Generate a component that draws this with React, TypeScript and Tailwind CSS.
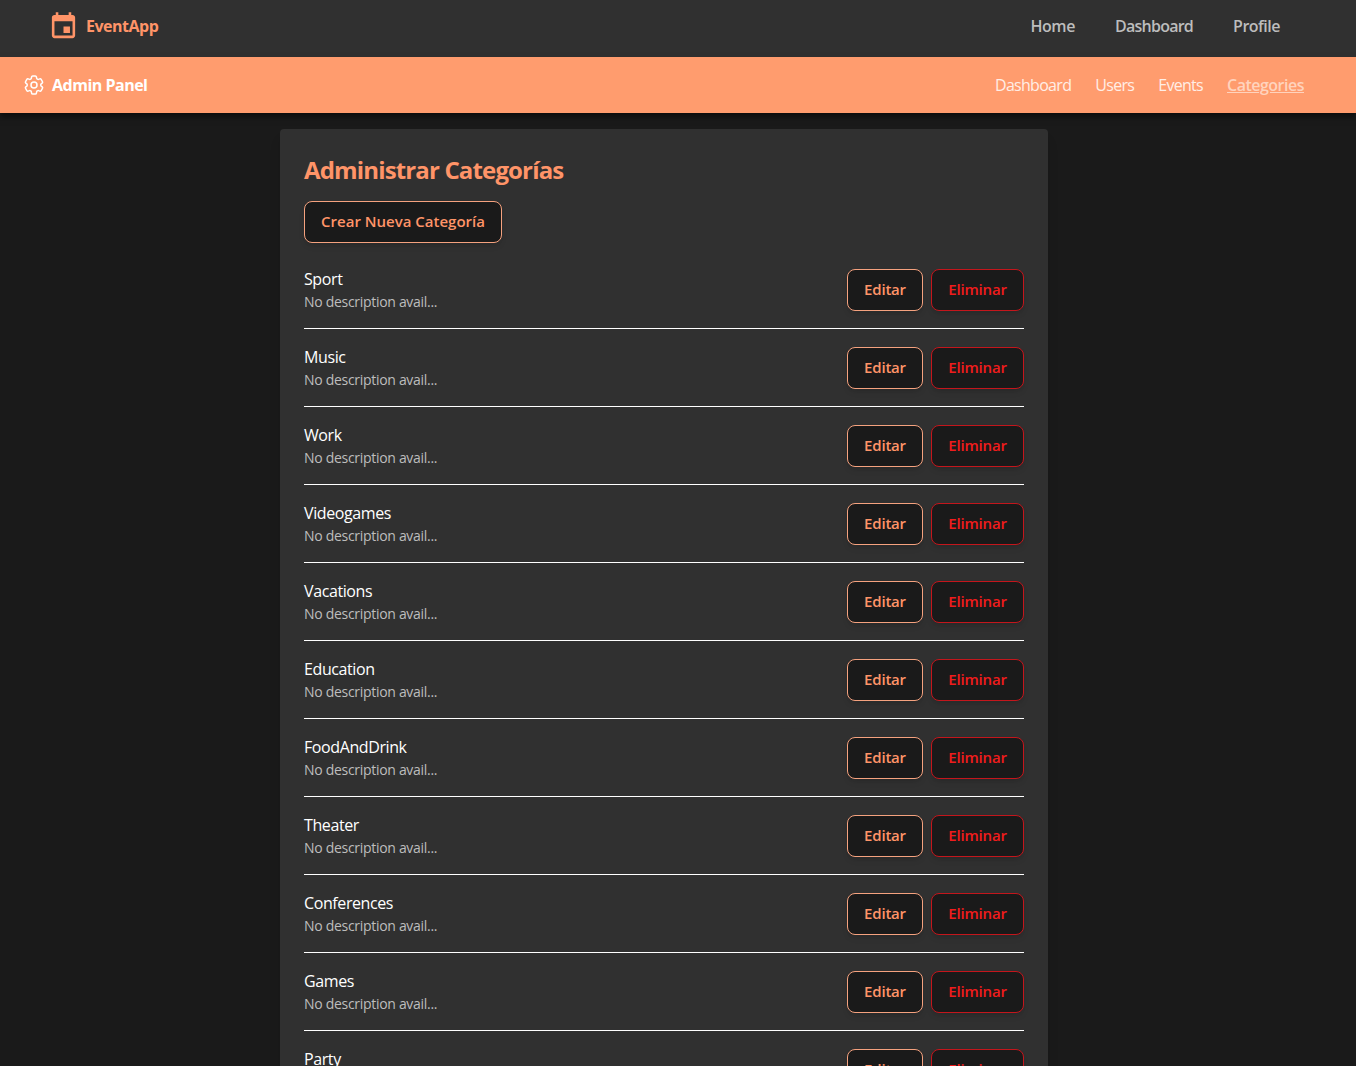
import { HiOutlineCog6Tooth } from 'react-icons/hi2';

const categories = ['Sport', 'Music', 'Work', 'Videogames', 'Vacations', 'Education', 'FoodAndDrink', 'Theater', 'Conferences', 'Games', 'Party'];

function EventIcon() {
    return (
        <svg viewBox="0 0 24 24" className="w-[31px] h-[31px] fill-[#ff9468]">
            <path d="M17 12h-5v5h5v-5zM16 1v2H8V1H6v2H5c-1.11 0-1.99.9-1.99 2L3 19c0 1.1.89 2 2 2h14c1.1 0 2-.9 2-2V5c0-1.1-.9-2-2-2h-1V1h-2zm3 18H5V8h14v11z" />
        </svg>
    );
}

function CategoryRow({ name }: { name: string }) {
    return (
        <li className="flex items-center justify-between pt-[17px] pb-4 border-b border-white">
            <div>
                <p className="text-base leading-[22px] text-white tracking-[-0.4px]">{name}</p>
                <p className="text-sm leading-[21px] mt-[1px] text-[#bdbdbd] tracking-[-0.3px]">No description avail...</p>
            </div>
            <div className="flex gap-2">
                <button className="h-[42px] w-[76px] pb-[1px] rounded-lg border border-[#f5a27f] bg-[#1a1a1a] text-[#ff9468] text-[15px] font-semibold shadow-md tracking-[-0.2px]">Editar</button>
                <button className="h-[42px] w-[93px] pb-[1px] rounded-lg border border-[#c4161c] bg-[#1a1a1a] text-[#f01c1c] text-[15px] font-semibold shadow-md tracking-[-0.2px]">Eliminar</button>
            </div>
        </li>
    );
}

export default function App() {
    return (
        <div className="h-screen overflow-hidden bg-[#1a1a1a] font-['Open_Sans',sans-serif]">
            <nav className="h-[57px] bg-[#303030] flex items-center justify-between pl-[48px] pr-[76px] pb-[5px]">
                <div className="flex items-center gap-[7px]">
                    <EventIcon />
                    <span className="text-base font-bold text-[#ff9468] tracking-[-0.5px]">EventApp</span>
                </div>
                <div className="flex gap-10 text-base font-semibold text-[#bdbdbd]">
                    <a className="tracking-[-0.45px]">Home</a>
                    <a className="tracking-[-0.75px]">Dashboard</a>
                    <a className="tracking-[-0.5px]">Profile</a>
                </div>
            </nav>
            <div className="relative h-[56px] bg-[#ff9c6e] flex items-center justify-between pl-[22px] pr-[52px] shadow-[0_4px_6px_rgba(0,0,0,0.5)]">
                <div className="flex items-center gap-[6px]">
                    <HiOutlineCog6Tooth className="w-6 h-6 text-white" />
                    <span className="text-base font-bold text-white tracking-[-0.5px]">Admin Panel</span>
                </div>
                <div className="flex gap-6 text-base text-[#ffeee6] tracking-[-0.7px]">
                    <a>Dashboard</a>
                    <a>Users</a>
                    <a>Events</a>
                    <a className="font-semibold text-[#ffd3bd] underline tracking-[-0.5px]">Categories</a>
                </div>
            </div>
            <main className="pr-[28px] pt-4">
                <div className="mx-auto max-w-3xl bg-[#303030] rounded p-6 shadow-lg">
                    <h1 className="text-2xl leading-[34px] font-bold text-[#ff9468] tracking-[-0.85px] mb-[14px]">Administrar Categorías</h1>
                    <button className="h-[42px] w-[198px] pb-[1px] rounded-lg border border-[#f5a27f] bg-[#1a1a1a] text-[#ff9468] text-[15px] font-semibold shadow-md mb-2">Crear Nueva Categoría</button>
                    <ul>
                        {categories.map((name) => (
                            <CategoryRow key={name} name={name} />
                        ))}
                    </ul>
                </div>
            </main>
        </div>
    );
}
